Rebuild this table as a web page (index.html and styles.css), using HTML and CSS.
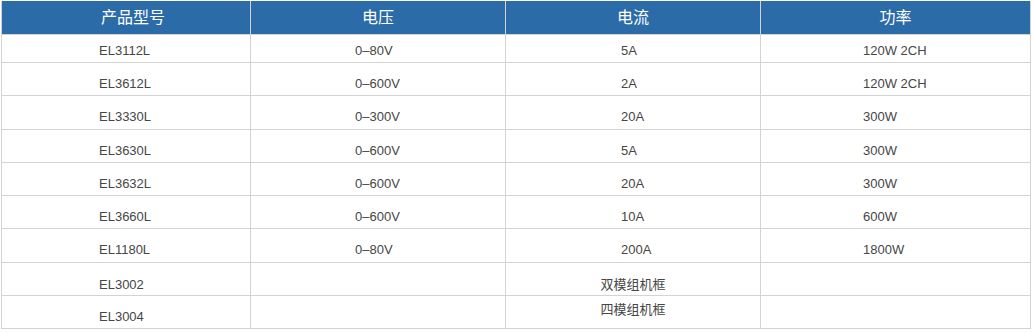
FILE: index.html
```html
<!DOCTYPE html>
<html>
  <head>
    <title>产品参数</title>
    <link rel="stylesheet" href="styles.css">
  </head>
  <body>
    <table class="spec">
      <colgroup>
        <col class="c1">
        <col class="c2">
        <col class="c3">
        <col class="c4">
      </colgroup>
      <thead>
        <tr>
          <th class="model-head">产品型号</th>
          <th>电压</th>
          <th>电流</th>
          <th>功率</th>
        </tr>
      </thead>
      <tbody>
        <tr class="first">
          <td>EL3112L</td>
          <td>0–80V</td>
          <td>5A</td>
          <td>120W 2CH</td>
        </tr>
        <tr>
          <td>EL3612L</td>
          <td>0–600V</td>
          <td>2A</td>
          <td>120W 2CH</td>
        </tr>
        <tr>
          <td>EL3330L</td>
          <td>0–300V</td>
          <td>20A</td>
          <td>300W</td>
        </tr>
        <tr>
          <td>EL3630L</td>
          <td>0–600V</td>
          <td>5A</td>
          <td>300W</td>
        </tr>
        <tr>
          <td>EL3632L</td>
          <td>0–600V</td>
          <td>20A</td>
          <td>300W</td>
        </tr>
        <tr>
          <td>EL3660L</td>
          <td>0–600V</td>
          <td>10A</td>
          <td>600W</td>
        </tr>
        <tr>
          <td>EL1180L</td>
          <td>0–80V</td>
          <td>200A</td>
          <td>1800W</td>
        </tr>
        <tr class="frame">
          <td>EL3002</td>
          <td></td>
          <td class="note">双模组机框</td>
          <td></td>
        </tr>
        <tr>
          <td>EL3004</td>
          <td></td>
          <td class="note note-up">四模组机框</td>
          <td></td>
        </tr>
      </tbody>
    </table>
  </body>
</html>
```

FILE: styles.css
```css
body {
  margin: 0;
  background: #fff;
  font-family: "Liberation Sans", Arial, "Noto Sans CJK SC", sans-serif;
}
.spec {
  margin: 1px 0 0 1px;
  width: 1030px;
  table-layout: fixed;
  border-collapse: collapse;
  font-size: 13px;
  line-height: 16px;
  color: #464646;
}
.c1 { width: 249px; }
.c2 { width: 255px; }
.c3 { width: 255px; }
.c4 { width: 270px; }

.spec th {
  background: #2b6ca8;
  color: #fff;
  font-family: "Noto Sans CJK SC", sans-serif;
  font-weight: normal;
  font-size: 16px;
  line-height: 20px;
  padding: 5px 0 8px;
  text-align: center;
  border: 1px solid #d3d3d3;
  border-top: none;
}
.spec th.model-head {
  padding-left: 14px;
}
.spec td {
  border: 1px solid #d3d3d3;
  padding: 13px 0 3.25px;
  text-align: left;
  vertical-align: top;
  white-space: nowrap;
}
.spec td:nth-child(1) { padding-left: 97px; }
.spec td:nth-child(2) { padding-left: 104px; }
.spec td:nth-child(3) { padding-left: 115px; }
.spec td:nth-child(4) { padding-left: 102px; }

.spec .first td {
  padding-top: 8px;
  padding-bottom: 3px;
}
.spec .frame td {
  padding-top: 14px;
  padding-bottom: 2.25px;
}
.spec td.note {
  padding-left: 0;
  text-align: center;
}
.spec td.note-up {
  padding-top: 6px;
  padding-bottom: 10px;
}
```
